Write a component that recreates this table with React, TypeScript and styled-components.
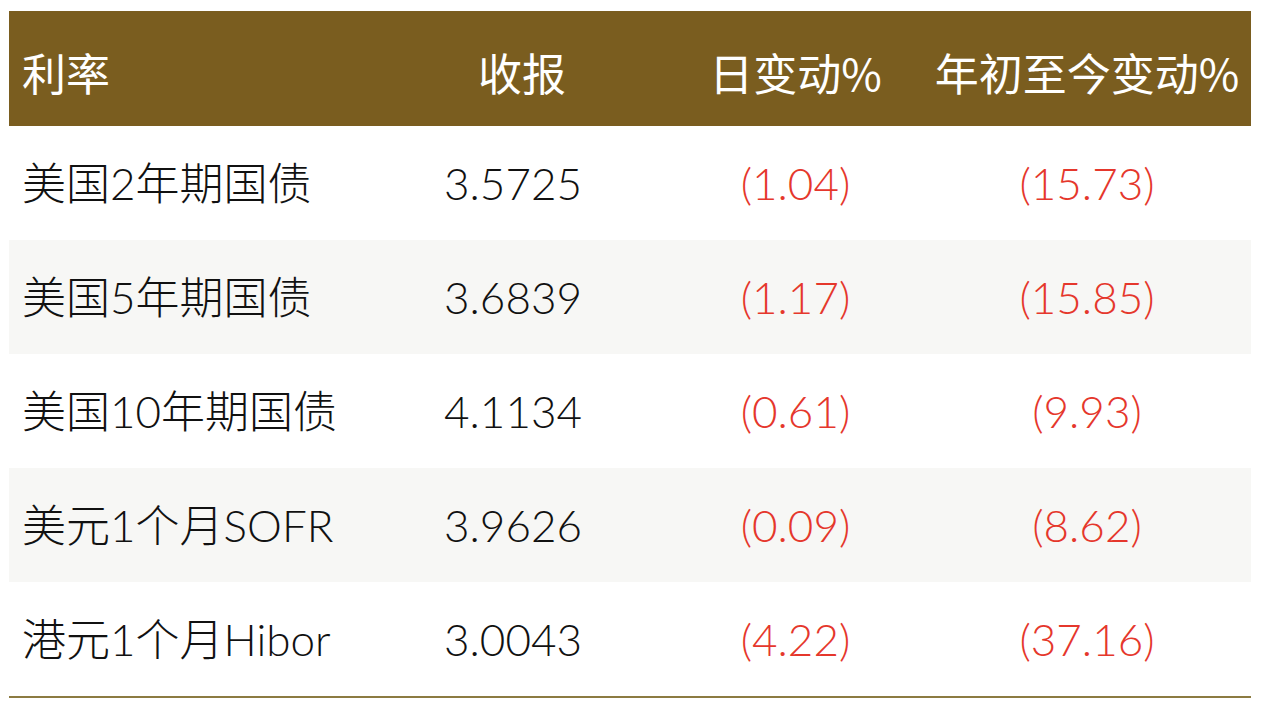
import React from "react";
import styled, { createGlobalStyle } from "styled-components";

const GlobalStyle = createGlobalStyle`
    html, body {
        margin: 0;
        padding: 0;
        background: #ffffff;
    }
    body {
        font-family: Lato, "Noto Sans CJK SC", sans-serif;
    }
`;

const Page = styled.div`
    padding: 11px 11px 0 9px;
`;

const Table = styled.div`
    width: 1242px;
    border-bottom: 2px solid #8c7b41;
`;

const Row = styled.div<{ $shaded?: boolean; $head?: boolean }>`
    display: grid;
    grid-template-columns: 417px 174px 323px 1fr;
    align-items: center;
    height: ${p => (p.$head ? "115px" : "114px")};
    padding-top: ${p => (p.$head ? "8px" : "0")};
    box-sizing: border-box;
    background: ${p => (p.$head ? "#7a5d1f" : p.$shaded ? "#f7f7f5" : "#ffffff")};
    color: ${p => (p.$head ? "#ffffff" : "#111111")};
    font-size: 44px;
    font-weight: 300;
    line-height: 1;
    white-space: nowrap;
`;

const Cell = styled.div<{ $align?: "left" | "center"; $red?: boolean; $shift?: number }>`
    text-align: ${p => p.$align || "center"};
    padding-left: ${p => (p.$align === "left" ? "13px" : `${p.$shift || 0}px`)};
    color: ${p => (p.$red ? "#e5372c" : "inherit")};
`;

const HeadText = styled.span`
    font-family: "Noto Sans CJK SC", sans-serif;
    font-weight: 400;
    font-size: 44px;
`;

const rows = [
    ["美国2年期国债", "3.5725", "(1.04)", "(15.73)"],
    ["美国5年期国债", "3.6839", "(1.17)", "(15.85)"],
    ["美国10年期国债", "4.1134", "(0.61)", "(9.93)"],
    ["美元1个月SOFR", "3.9626", "(0.09)", "(8.62)"],
    ["港元1个月Hibor", "3.0043", "(4.22)", "(37.16)"],
];

export default function App() {
    return (
        <Page>
            <GlobalStyle />
            <Table>
                <Row $head>
                    <Cell $align="left"><HeadText>利率</HeadText></Cell>
                    <Cell $shift={18}><HeadText>收报</HeadText></Cell>
                    <Cell $shift={68}><HeadText>日变动%</HeadText></Cell>
                    <Cell><HeadText>年初至今变动%</HeadText></Cell>
                </Row>
                {rows.map((r, i) => (
                    <Row key={r[0]} $shaded={i % 2 === 1}>
                        <Cell $align="left">{r[0]}</Cell>
                        <Cell>{r[1]}</Cell>
                        <Cell $red $shift={68}>{r[2]}</Cell>
                        <Cell $red>{r[3]}</Cell>
                    </Row>
                ))}
            </Table>
        </Page>
    );
}
